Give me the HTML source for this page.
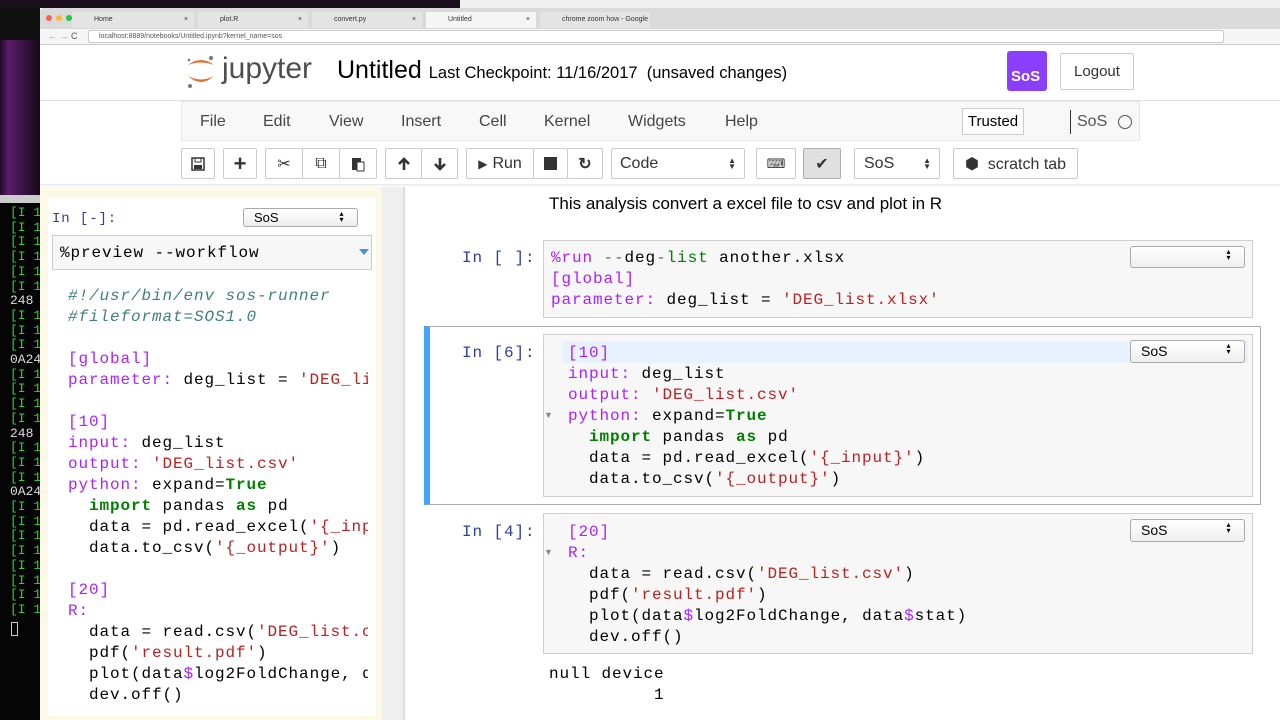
<!DOCTYPE html>
<html><head><meta charset="utf-8"><style>
*{margin:0;padding:0;box-sizing:border-box}
body{width:1280px;height:720px;overflow:hidden;position:relative;background:#111;font-family:"Liberation Sans",sans-serif}
.a{position:absolute}
.m{font-family:"Liberation Mono",monospace;font-size:16px;letter-spacing:0.9px;line-height:21px;white-space:pre;color:#000}
.kw{color:#aa22ff}.st{color:#ba2121}.gr{color:#008000;font-weight:bold}.cm{color:#408080;font-style:italic}.pr{color:#303f9f}
.btn{position:absolute;top:148px;height:31px;border:1px solid #ccc;border-radius:2px;background:#fff;display:flex;align-items:center;justify-content:center;font-size:16px;color:#333}
.sel{position:absolute;border:1px solid #aaa;border-radius:3px;background:linear-gradient(#fff,#eee);font-size:14px;padding-left:10px;line-height:20px;color:#000}
.sel:after{content:"▴▾";position:absolute;right:6px;top:0;font-size:8px;writing-mode:vertical-lr;letter-spacing:-3px;line-height:20px}
.tab{position:absolute;top:12px;height:16px;font-size:7px;color:#333;padding:4px 0 0 22px;white-space:nowrap;overflow:hidden}
.term{color:#2fd02f;font-family:"Liberation Mono",monospace;font-size:13px;line-height:14.7px;white-space:pre}
</style></head><body>
<div class="a" style="left:0;top:0;width:460px;height:8px;background:#1a0d1c"></div>
<div class="a" style="left:460px;top:0;width:820px;height:10px;background:#f0f0f0"></div>
<div class="a" style="left:0;top:40px;width:40px;height:160px;background:linear-gradient(90deg,#200a25,#5a1d6a 20%,#150818)"></div>
<div class="a" style="left:0;top:195px;width:40px;height:525px;background:#050505"></div>
<div class="a" style="left:0;top:195px;width:40px;height:8px;background:#ccc"></div>
<div class="a term" style="left:10px;top:206px">[I 15
[I 15
[I 15
[I 15
[I 15
[I 15
<span style="color:#ddd">248</span>
[I 15
[I 15
[I 15
<span style="color:#ddd">0A248</span>
[I 15
[I 15
[I 15
[I 15
<span style="color:#ddd">248</span>
[I 15
[I 15
[I 15
<span style="color:#ddd">0A248</span>
[I 15
[I 15
[I 15
[I 15
[I 15
[I 15
[I 15
[I 15</div>
<div class="a" style="left:11px;top:622px;width:7px;height:14px;border:1px solid #ccc"></div>
<div class="a" style="left:40px;top:8px;width:1240px;height:712px;background:#fff"></div>
<div class="a" style="left:40px;top:8px;width:1240px;height:21px;background:#dadada;border-radius:4px 0 0 0"></div>
<div class="a" style="left:46px;top:15px;width:6px;height:6px;border-radius:50%;background:#fc5f57"></div>
<div class="a" style="left:56px;top:15px;width:6px;height:6px;border-radius:50%;background:#fdbc2e"></div>
<div class="a" style="left:66px;top:15px;width:6px;height:6px;border-radius:50%;background:#28c840"></div>
<div class="tab" style="left:72px;width:122px;background:#e4e4e4">Home<span style="float:right;margin-right:6px">×</span></div>
<div class="tab" style="left:198px;width:110px;background:#e4e4e4">plot.R<span style="float:right;margin-right:6px">×</span></div>
<div class="tab" style="left:312px;width:110px;background:#e4e4e4">convert.py<span style="float:right;margin-right:6px">×</span></div>
<div class="tab" style="left:426px;width:110px;background:#f5f5f5">Untitled<span style="float:right;margin-right:6px">×</span></div>
<div class="tab" style="left:540px;width:110px;background:#e4e4e4">chrome zoom how - Google Se</div>
<div class="a" style="left:40px;top:29px;width:1240px;height:16px;background:#f5f5f5;border-bottom:1px solid #ccc"></div>
<div class="a" style="left:88px;top:30px;width:1136px;height:13px;background:#fff;border:1px solid #ccc;border-radius:2px;font-size:7px;color:#555;padding:2px 0 0 10px">localhost:8889/notebooks/Untitled.ipynb?kernel_name=sos</div>
<div class="a" style="left:48px;top:31px;font-size:9px;color:#999">← → <span style="color:#555">C</span></div>
<div class="a" style="left:40px;top:100px;width:1240px;height:1px;background:#e0e0e0"></div>
<svg class="a" style="left:184px;top:52px" width="34" height="38"><path d="M4 13 Q17 3 30 13 Q17 8 4 13Z" fill="#e46e2e"/><path d="M4 24 Q17 36 30 24 Q17 31 4 24Z" fill="#e46e2e"/><circle cx="27" cy="6" r="2" fill="#767677"/><circle cx="6" cy="34" r="2" fill="#767677"/><circle cx="5" cy="8" r="1.3" fill="#767677"/></svg>
<div class="a" style="left:222px;top:52px;font-size:30px;color:#4e4e4e">jupyter</div>
<div class="a" style="left:337px;top:56px;font-size:25px;color:#000">Untitled <span style="font-size:16.5px">Last Checkpoint: 11/16/2017 &nbsp;(unsaved changes)</span></div>
<div class="a" style="left:1007px;top:51px;width:40px;height:40px;background:#8a3ffc;border-radius:3px;color:#fff;font-weight:bold;font-size:15px;padding:17px 0 0 4px">SoS</div>
<div class="a" style="left:1060px;top:53px;width:74px;height:37px;border:1px solid #ccc;border-radius:2px;font-size:15px;text-align:center;line-height:35px;color:#333">Logout</div>
<div class="a" style="left:181px;top:101px;width:959px;height:40px;background:#f8f8f8;border:1px solid #e7e7e7"></div>
<div class="a" style="top:113px;left:200px;font-size:16px;color:#444">
<span class="a" style="left:0">File</span><span class="a" style="left:63px">Edit</span><span class="a" style="left:129px">View</span><span class="a" style="left:201px">Insert</span><span class="a" style="left:279px">Cell</span><span class="a" style="left:344px">Kernel</span><span class="a" style="left:428px">Widgets</span><span class="a" style="left:525px">Help</span></div>
<div class="a" style="left:962px;top:108px;width:62px;height:27px;border:1px solid #ccc;background:#fff;font-size:15px;text-align:center;line-height:25px;color:#000">Trusted</div>
<div class="a" style="left:1070px;top:110px;width:1px;height:24px;background:#333"></div>
<div class="a" style="left:1077px;top:113px;font-size:16px;color:#555">SoS</div>
<div class="a" style="left:1118px;top:115px;width:14px;height:14px;border:1.5px solid #555;border-radius:50%"></div>
<div class="btn" style="left:181px;width:34px">
<svg width="14" height="14"><rect x="1" y="1" width="12" height="12" fill="none" stroke="#333" stroke-width="1.5"/><rect x="4" y="1" width="6" height="4" fill="none" stroke="#333"/><rect x="3" y="8" width="8" height="4" fill="#333"/></svg></div>
<div class="btn" style="left:223px;width:34px;font-size:22px;font-weight:bold">+</div>
<div class="btn" style="left:265px;width:38px">✂</div>
<div class="btn" style="left:302px;width:38px">⧉</div>
<div class="btn" style="left:339px;width:38px">
<svg width="14" height="16"><rect x="1" y="2" width="9" height="12" fill="#333"/><rect x="6" y="6" width="7" height="9" fill="#fff" stroke="#333"/></svg></div>
<div class="btn" style="left:385px;width:37px"><svg width="14" height="14"><path d="M7 13V3M2 7L7 2L12 7" stroke="#333" stroke-width="2.6" fill="none"/></svg></div>
<div class="btn" style="left:421px;width:37px"><svg width="14" height="14"><path d="M7 1V11M2 7L7 12L12 7" stroke="#333" stroke-width="2.6" fill="none"/></svg></div>
<div class="btn" style="left:466px;width:68px;font-size:16px"><span style="font-size:12px;margin-right:5px">▶</span>Run</div>
<div class="btn" style="left:533px;width:35px"><div style="width:13px;height:13px;background:#333"></div></div>
<div class="btn" style="left:567px;width:36px;font-weight:bold">↻</div>
<div class="btn" style="left:611px;width:134px;justify-content:flex-start;padding-left:8px">Code<span style="position:absolute;right:8px;font-size:8px;line-height:6px">▲<br>▼</span></div>
<div class="btn" style="left:756px;width:40px;font-size:13px">⌨</div>
<div class="btn" style="left:803px;width:38px;background:#e0e0e0;border-color:#adadad;font-size:16px">✔</div>
<div class="btn" style="left:854px;width:86px;justify-content:flex-start;padding-left:9px">SoS<span style="position:absolute;right:8px;font-size:8px;line-height:6px">▲<br>▼</span></div>
<div class="btn" style="left:953px;width:125px">⬢&nbsp; scratch tab</div>
<div class="a" style="left:40px;top:184px;width:1240px;height:3px;background:linear-gradient(#e8e8e8,#fff)"></div>
<div class="a" style="left:40px;top:187px;width:342px;height:533px;background:#fcf9e6"></div>
<div class="a" style="left:48px;top:198px;width:328px;height:518px;background:#fff"></div>
<div class="a" style="left:382px;top:187px;width:23px;height:533px;background:#efefef"></div>
<div class="a" style="left:403px;top:187px;width:2px;height:533px;background:#ddd"></div>
<div class="a m pr" style="left:52px;top:209px;font-size:14px">In [-]:</div>
<div class="sel" style="left:243px;top:208px;width:115px;height:19px;line-height:17px;font-size:13px">SoS</div>
<div class="a" style="left:52px;top:235px;width:320px;height:35px;background:#f7f7f7;border:1px solid #ccc"></div>
<div class="a m" style="left:60px;top:243px">%preview --workflow</div>
<div class="a" style="left:359px;top:249px;width:0;height:0;border-left:5px solid transparent;border-right:5px solid transparent;border-top:6px solid #4a90d9"></div>
<div class="a" style="left:68px;top:286px;width:300px;height:420px;overflow:hidden"><div class="m"><span class="cm">#!/usr/bin/env sos-runner
#fileformat=SOS1.0</span>

<span class="kw">[global]</span>
<span class="kw">parameter:</span> deg_list = <span class="st">'DEG_list.xlsx'</span>

<span class="kw">[10]</span>
<span class="kw">input:</span> deg_list
<span class="kw">output:</span> <span class="st">'DEG_list.csv'</span>
<span class="kw">python:</span> expand=<span class="gr">True</span>
  <span class="gr">import</span> pandas <span class="gr">as</span> pd
  data = pd.read_excel(<span class="st">'{_input}'</span>)
  data.to_csv(<span class="st">'{_output}'</span>)

<span class="kw">[20]</span>
<span class="kw">R:</span>
  data = read.csv(<span class="st">'DEG_list.csv'</span>)
  pdf(<span class="st">'result.pdf'</span>)
  plot(data<span class="kw">$</span>log2FoldChange, data<span class="kw">$</span>stat)
  dev.off()</div></div>
<div class="a" style="left:549px;top:194px;font-size:17px;color:#000">This analysis convert a excel file to csv and plot in R</div>
<div class="a m pr" style="left:462px;top:248px">In [ ]:</div>
<div class="a" style="left:543px;top:240px;width:710px;height:78px;background:#f7f7f7;border:1px solid #cfcfcf"></div>
<div class="a m" style="left:551px;top:248px"><span class="kw">%run</span> <span style="color:#666">--</span>deg<span style="color:#666">-</span><span style="color:#008000">list</span> another.xlsx
<span class="kw">[global]</span>
<span class="kw">parameter:</span> deg_list = <span class="st">'DEG_list.xlsx'</span></div>
<div class="sel" style="left:1130px;top:246px;width:115px;height:22px"></div>
<div class="a" style="left:424px;top:326px;width:837px;height:179px;border:1px solid #ababab;border-left:6px solid #42a5f5"></div>
<div class="a m pr" style="left:462px;top:343px">In [6]:</div>
<div class="a" style="left:543px;top:334px;width:710px;height:163px;background:#f7f7f7;border:1px solid #cfcfcf"></div>
<div class="a" style="left:562px;top:341px;width:686px;height:22px;background:#e8f2ff"></div>
<div class="a m" style="left:568px;top:343px"><span class="kw">[10]</span>
<span class="kw">input:</span> deg_list
<span class="kw">output:</span> <span class="st">'DEG_list.csv'</span>
<span class="kw">python:</span> expand=<span class="gr">True</span>
  <span class="gr">import</span> pandas <span class="gr">as</span> pd
  data = pd.read_excel(<span class="st">'{_input}'</span>)
  data.to_csv(<span class="st">'{_output}'</span>)</div>
<div class="a" style="left:544px;top:410px;font-size:9px;color:#888">▼</div>
<div class="sel" style="left:1130px;top:340px;width:115px;height:23px">SoS</div>
<div class="a m pr" style="left:462px;top:522px">In [4]:</div>
<div class="a" style="left:543px;top:513px;width:710px;height:141px;background:#f7f7f7;border:1px solid #cfcfcf"></div>
<div class="a m" style="left:568px;top:522px"><span class="kw">[20]</span>
<span class="kw">R:</span>
  data = read.csv(<span class="st">'DEG_list.csv'</span>)
  pdf(<span class="st">'result.pdf'</span>)
  plot(data<span class="kw">$</span>log2FoldChange, data<span class="kw">$</span>stat)
  dev.off()</div>
<div class="a" style="left:544px;top:547px;font-size:9px;color:#888">▼</div>
<div class="sel" style="left:1130px;top:519px;width:115px;height:23px">SoS</div>
<div class="a m" style="left:549px;top:664px">null device
          1</div>
</body></html>
